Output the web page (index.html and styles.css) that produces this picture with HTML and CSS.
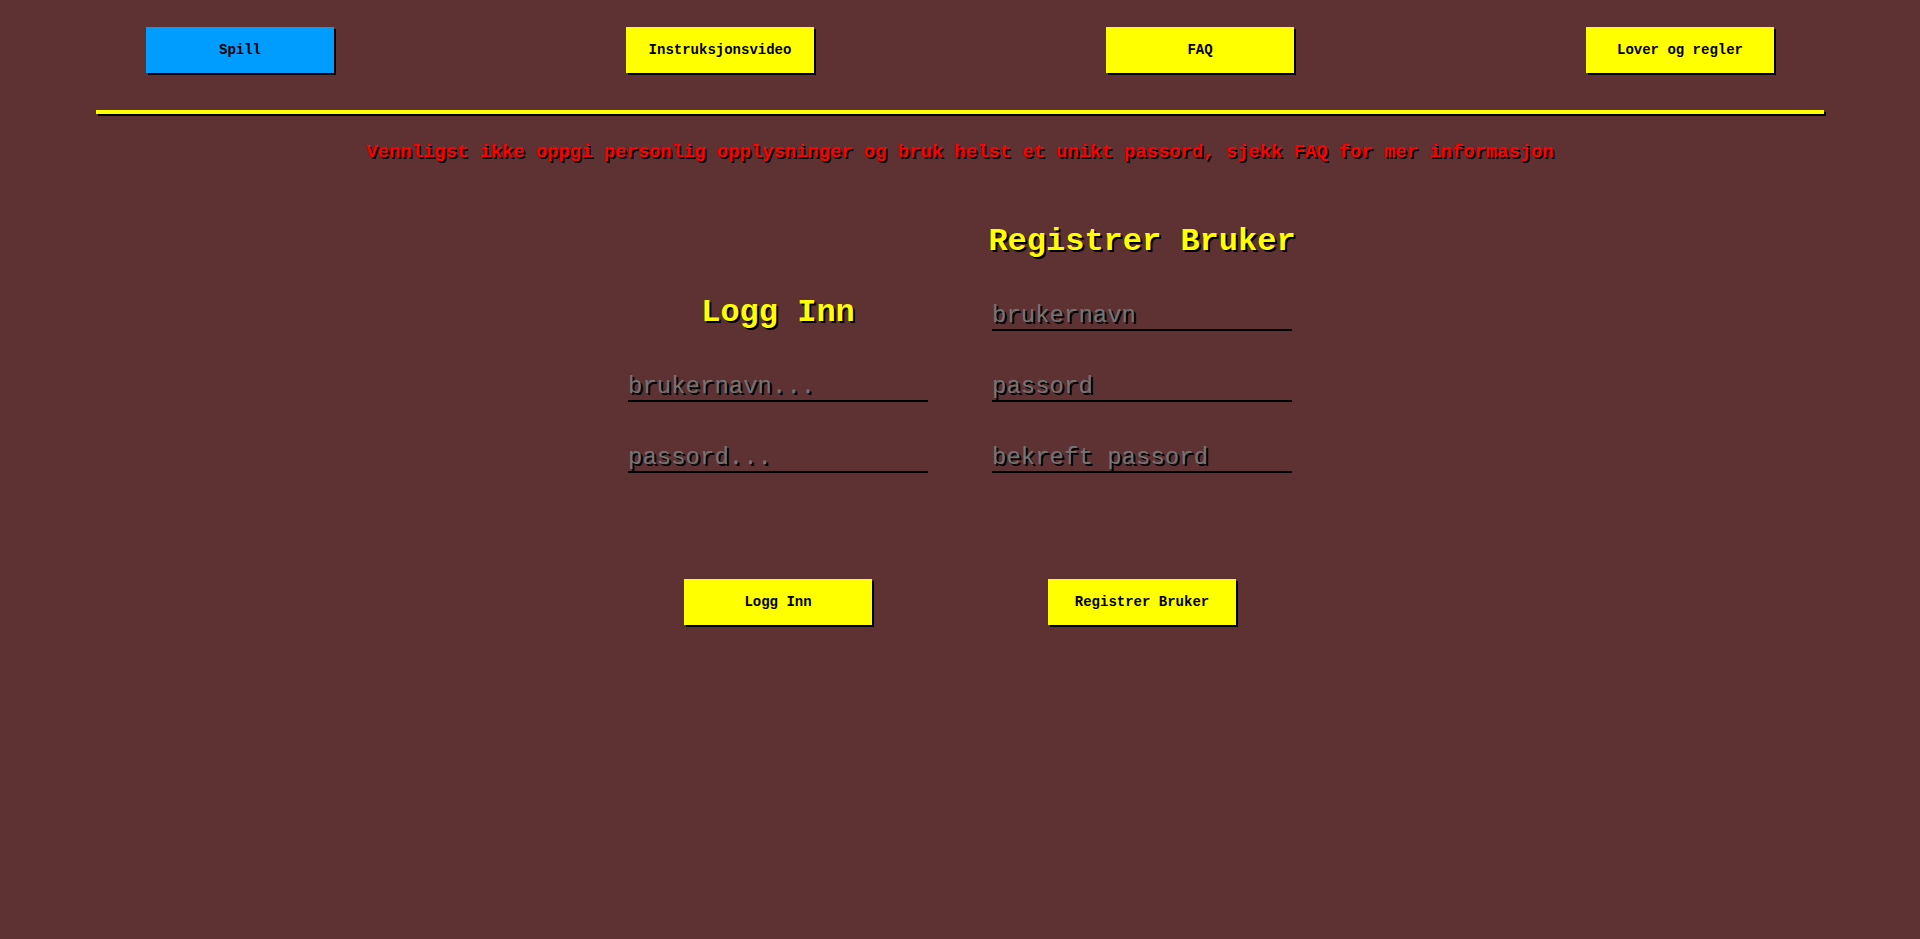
FILE: index.html
```html
<!DOCTYPE html>
<html lang="no">
<head>
<meta charset="utf-8">
<title>Logg inn</title>
<link rel="stylesheet" href="styles.css">
</head>
<body>
<nav class="topnav">
  <div class="navcell"><button class="btn btn-active">Spill</button></div>
  <div class="navcell"><button class="btn">Instruksjonsvideo</button></div>
  <div class="navcell"><button class="btn">FAQ</button></div>
  <div class="navcell"><button class="btn">Lover og regler</button></div>
</nav>
<div class="rule"></div>
<p class="warning">Vennligst ikke oppgi personlig opplysninger og bruk helst et unikt passord, sjekk FAQ for mer informasjon</p>
<main class="forms">
  <form class="form-col">
    <h2 class="form-title">Logg Inn</h2>
    <input class="field" type="text" placeholder="brukernavn...">
    <input class="field" type="password" placeholder="passord...">
    <button class="btn form-btn" type="button">Logg Inn</button>
  </form>
  <form class="form-col">
    <h2 class="form-title">Registrer Bruker</h2>
    <input class="field" type="text" placeholder="brukernavn">
    <input class="field" type="password" placeholder="passord">
    <input class="field" type="password" placeholder="bekreft passord">
    <button class="btn form-btn" type="button">Registrer Bruker</button>
  </form>
</main>
</body>
</html>
```
FILE: styles.css
```css
html, body {
  margin: 0;
  padding: 0;
}
body {
  background: #5e3133;
  font-family: "Liberation Mono", "Courier New", monospace;
  min-height: 939px;
}
.topnav {
  display: grid;
  grid-template-columns: repeat(4, 1fr);
  padding-top: 27px;
}
.navcell {
  display: flex;
  justify-content: center;
}
.btn {
  width: 188px;
  height: 46px;
  background: #ffff00;
  color: #000;
  border: none;
  box-shadow: 2px 2px 0 #000;
  font-family: "Liberation Mono", "Courier New", monospace;
  font-weight: bold;
  font-size: 14px;
  padding: 0;
  cursor: pointer;
}
.btn-active {
  background: #009dff;
}
.rule {
  width: 90%;
  height: 4px;
  margin: 37px auto 0;
  background: #ffff00;
  box-shadow: 2px 2px 0 #000;
}
.warning {
  margin: 27px 0 0;
  text-align: center;
  color: #ff0000;
  font-weight: bold;
  font-size: 18.85px;
  text-shadow: 2px 2px 0 #000;
}
.forms {
  display: flex;
  justify-content: center;
  align-items: flex-end;
  gap: 64px;
  margin-top: 60px;
}
.form-col {
  width: 300px;
  display: flex;
  flex-direction: column;
  align-items: center;
  gap: 42px;
  margin: 0;
}
.form-title {
  margin: 0;
  font-size: 32px;
  font-weight: bold;
  color: #ffff00;
  text-shadow: 2px 2px 0 #000;
  text-align: center;
  white-space: nowrap;
}
.field {
  display: block;
  width: 300px;
  box-sizing: border-box;
  background: transparent;
  border: none;
  border-bottom: 2px solid #000;
  padding: 0;
  margin: 0;
  font-family: "Liberation Mono", "Courier New", monospace;
  font-weight: normal;
  font-size: 24px;
  color: #ddd;
  outline: none;
}
.field::placeholder {
  color: #757575;
  text-shadow: 2px 2px 0 #000;
  opacity: 1;
}
.form-btn {
  margin-top: 64px;
}
```
